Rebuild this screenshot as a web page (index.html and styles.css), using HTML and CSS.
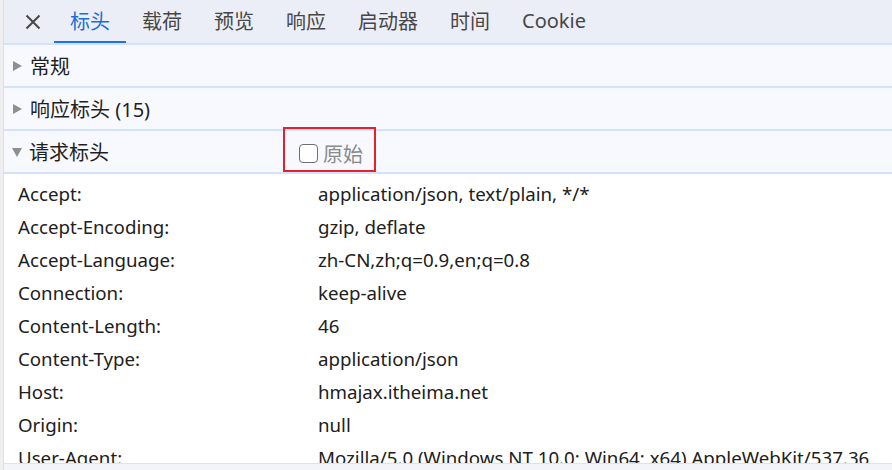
FILE: index.html
```html
<!DOCTYPE html>
<html lang="zh-CN">
<head>
<meta charset="utf-8">
<title>标头</title>
<link rel="stylesheet" href="styles.css">
</head>
<body>
<div class="shell">
  <div class="gutter"></div>
  <div class="panel">
    <div class="tabs">
      <div class="close">
        <svg width="16" height="16" viewBox="0 0 16 16"><path d="M1.5 1.5L14.5 14.5M14.5 1.5L1.5 14.5" stroke="#474747" stroke-width="2" fill="none"/></svg>
      </div>
      <div class="tab active">标头</div>
      <div class="tab">载荷</div>
      <div class="tab">预览</div>
      <div class="tab">响应</div>
      <div class="tab">启动器</div>
      <div class="tab">时间</div>
      <div class="tab">Cookie</div>
    </div>
    <div class="section">
      <span class="tri right"></span><span class="title">常规</span>
    </div>
    <div class="section">
      <span class="tri right"></span><span class="title">响应标头 (15)</span>
    </div>
    <div class="section">
      <span class="tri down"></span><span class="title wide">请求标头</span>
      <label class="raw"><span class="box"></span><span class="raw-text">原始</span></label>
    </div>
    <div class="content">
      <div class="row"><span class="name">Accept:</span><span class="val">application/json, text/plain, */*</span></div>
      <div class="row"><span class="name">Accept-Encoding:</span><span class="val">gzip, deflate</span></div>
      <div class="row"><span class="name">Accept-Language:</span><span class="val">zh-CN,zh;q=0.9,en;q=0.8</span></div>
      <div class="row"><span class="name">Connection:</span><span class="val">keep-alive</span></div>
      <div class="row"><span class="name">Content-Length:</span><span class="val">46</span></div>
      <div class="row"><span class="name">Content-Type:</span><span class="val">application/json</span></div>
      <div class="row"><span class="name">Host:</span><span class="val">hmajax.itheima.net</span></div>
      <div class="row"><span class="name">Origin:</span><span class="val">null</span></div>
      <div class="row"><span class="name">User-Agent:</span><span class="val">Mozilla/5.0 (Windows NT 10.0; Win64; x64) AppleWebKit/537.36</span></div>
    </div>
    <div class="hscroll"></div>
  </div>
</div>
</body>
</html>
```

FILE: styles.css
```css
html, body {
  margin: 0;
  padding: 0;
  background: #ffffff;
  overflow: hidden;
}
body {
  font-family: "Noto Sans", "Noto Sans CJK SC", sans-serif;
  color: #1f1f1f;
}
.shell {
  display: flex;
  width: 892px;
  height: 470px;
}
.gutter {
  width: 3px;
  background: #efeff1;
  flex: none;
}
.panel {
  flex: 1;
  display: flex;
  flex-direction: column;
  border-left: 1px solid #d5e1f7;
  min-width: 0;
  overflow: hidden;
}
.tabs {
  height: 43px;
  flex: none;
  display: flex;
  align-items: stretch;
  background: #eceef7;
  border-bottom: 2px solid #d3e3fd;
}
.close {
  display: flex;
  align-items: center;
  padding-left: 21px;
  padding-right: 13px;
}
.close svg { display: block; }
.tab {
  display: flex;
  align-items: center;
  padding: 0 16px;
  font-size: 20px;
  color: #474747;
  border-bottom: 2px solid transparent;
  box-sizing: border-box;
}
.tab.active {
  color: #1a6ed8;
  border-bottom-color: #1a73e8;
}
.section {
  flex: none;
  height: 41px;
  display: flex;
  align-items: center;
  padding-left: 8px;
  background: #f8f9fe;
  border-bottom: 2px solid #d3e3fd;
  font-size: 20px;
  color: #1f1f1f;
}
.tri {
  width: 0;
  height: 0;
  flex: none;
}
.tri.right {
  border-top: 5.5px solid transparent;
  border-bottom: 5.5px solid transparent;
  border-left: 9px solid #8f8f8f;
  margin-left: 1px;
  margin-right: 8px;
}
.tri.down {
  border-left: 5px solid transparent;
  border-right: 5px solid transparent;
  border-top: 9px solid #8f8f8f;
  margin-top: 2px;
  margin-right: 7px;
}
.title.wide {
  width: 270px;
  flex: none;
}
.raw {
  position: relative;
  display: inline-flex;
  align-items: center;
  height: 24px;
  margin-top: 4px;
  color: #8a8a8a;
}
.raw::after {
  content: "";
  position: absolute;
  left: -16px;
  right: -13px;
  top: -15px;
  bottom: -6px;
  border: 2px solid #e5222b;
}
.box {
  width: 19px;
  height: 19px;
  box-sizing: border-box;
  border: 1.5px solid #6f6f6f;
  border-radius: 4px;
  background: #ffffff;
  margin-right: 5px;
}
.content {
  flex: 1;
  min-height: 0;
  overflow: hidden;
  background: #ffffff;
  padding-top: 3px;
}
.row {
  display: grid;
  grid-template-columns: 300px 1fr;
  height: 33px;
  line-height: 33px;
  padding-left: 14px;
  font-size: 18.7px;
  color: #202020;
  white-space: nowrap;
}
.hscroll {
  flex: none;
  height: 6px;
  background: #f3f4f9;
  border-top: 1px solid #d9e3f5;
}
```
